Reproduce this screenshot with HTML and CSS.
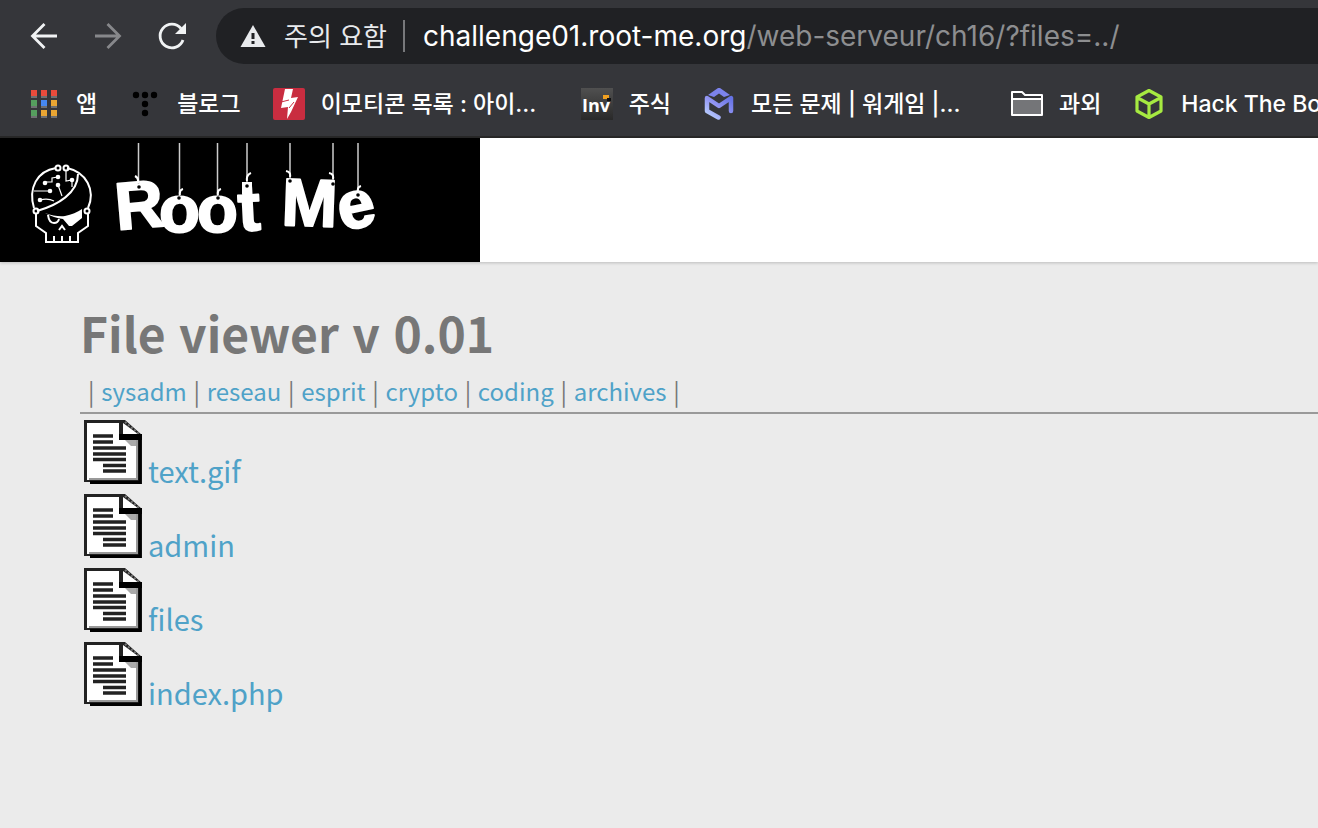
FILE: index.html
```html
<!DOCTYPE html>
<html lang="ko">
<head>
<meta charset="utf-8">
<title>File viewer v 0.01</title>
<link rel="stylesheet" href="styles.css">
</head>
<body>
<svg class="defs" aria-hidden="true">
  <symbol id="doc" viewBox="0 0 58 64">
    <path d="M0 0H41L58 15V64H6V62H0Z" fill="#222"/>
    <path d="M3 3H35V19H54V60H3Z" fill="#fff"/>
    <path d="M39 3L54 14H39Z" fill="#fff"/>
    <path d="M41 2L55 14" stroke="#777" stroke-width="2" stroke-dasharray="2 2"/>
    <path d="M35 14H58V20H35Z" fill="#000"/>
    <path d="M41 20H54V26H47Z" fill="#aaa"/>
    <path d="M53 20V59H5" fill="none" stroke="#999" stroke-width="2"/>
    <path d="M56 16V62.500H6" fill="none" stroke="#000" stroke-width="3"/>
    <path d="M9 16H29M9 22H29M9 28H42M9 34H42M9 39.500H42M19 45.500H42M19 51H42" stroke="#222" stroke-width="3.600"/>
  </symbol>
</svg>
<header class="browser">
  <div class="toolbar">
    <button class="nav" aria-label="뒤로"><svg viewBox="0 0 32 32"><path d="M29 16H5M16.500 4L4.500 16L16.500 28" fill="none" stroke="#f1f3f4" stroke-width="2.800"/></svg></button>
    <button class="nav" aria-label="앞으로"><svg viewBox="0 0 32 32"><path d="M3 16H27M15.500 4L27.500 16L15.500 28" fill="none" stroke="#87888b" stroke-width="2.800"/></svg></button>
    <button class="nav" aria-label="새로고침"><svg viewBox="0 0 32 32"><path d="M27 20A11.800 11.800 0 1 1 25 8.500" fill="none" stroke="#f1f3f4" stroke-width="2.800"/><path d="M30 3V14H19Z" fill="#f1f3f4"/></svg></button>
    <div class="omnibox">
      <button class="site-info"><svg viewBox="0 0 26 24"><path d="M13 1L25.500 23H.5Z" fill="#e8eaed"/><path d="M11.500 9h3v6h-3zM11.500 17h3v3h-3z" fill="#202124"/></svg><span class="hangul">주의 요함</span></button>
      <div class="address"><span class="host">challenge01.root-me.org</span><span class="path">/web-serveur/ch16/?files=../</span></div>
    </div>
  </div>
  <nav class="bookmarks">
    <a href="#"><svg viewBox="0 0 32 32"><path d="M3 9h6M13 9h6M23 9h6M3 19h6M13 19h6M23 19h6M3 29h6M13 29h6M23 29h6" stroke="#a9a9aa" stroke-width="1"/><path d="M3 2h6v6H3zM13 2h6v6h-6zM23 2h6v6h-6z" fill="#e94b3c"/><path d="M3 12h6v6H3zM3 22h6v6H3z" fill="#559e5e"/><path d="M13 12h6v6h-6z" fill="#4688f1"/><path d="M23 12h6v6h-6zM13 22h6v6h-6zM23 22h6v6h-6z" fill="#e9a533"/></svg><span class="hangul">앱</span></a>
    <a href="#"><svg viewBox="0 0 32 32"><g fill="#000"><circle cx="7" cy="7" r="3.200"/><circle cx="16" cy="7" r="3.200"/><circle cx="25" cy="7" r="3.200"/><circle cx="16" cy="16" r="3.200"/><circle cx="16" cy="25" r="3.200"/></g></svg><span class="hangul">블로그</span></a>
    <a href="#"><svg viewBox="0 0 32 32"><rect width="32" height="32" rx="2" fill="#c92d40"/><path d="M12 1H20L18 10L25 9L18 24L14 31L15 19L8 20Z" fill="#fff"/><path d="M8 14L16 12M16 20L21 14" stroke="#c92d40" stroke-width="1"/></svg><span class="hangul clipped">이모티콘 목록 : 아이...</span></a>
    <a href="#"><svg viewBox="0 0 32 32"><defs><linearGradient id="inv" x2="0" y2="1"><stop stop-color="#505050"/><stop offset="1" stop-color="#292929"/></linearGradient></defs><rect width="32" height="32" fill="url(#inv)"/><text class="inv" x="1" y="24">Inv</text><path d="M22 7h6v4h-6z" fill="#f0a020"/><path d="M26 10h4v3h-4z" fill="#111"/></svg><span class="hangul">주식</span></a>
    <a href="#"><svg viewBox="0 0 32 32"><defs><linearGradient id="dream" x1="1" y1="0" x2="0" y2="1"><stop stop-color="#6673e5"/><stop offset=".5" stop-color="#9295f3"/><stop offset="1" stop-color="#bdd5ff"/></linearGradient></defs><path d="M5 7L15 0H17L27 7L21 9L16 5.500L11 9Z" fill="#7c83ec"/><path d="M15.500 29.500L4 23V10L16 18L28 10V23" fill="none" stroke="url(#dream)" stroke-width="4.500" stroke-linecap="round" stroke-linejoin="round"/></svg><span class="hangul clipped">모든 문제 | 워게임 |...</span></a>
    <a href="#"><svg viewBox="0 0 32 32"><path d="M1 27V4H11L14 7H31V27Z" fill="#35363a"/><path d="M2 11H30V26H2Z" fill="#747578"/><path d="M1 27V4H11L14 7H31V27ZM1 11H31" fill="none" stroke="#fff" stroke-width="2" stroke-linejoin="round"/></svg><span class="hangul">과외</span></a>
    <a href="#"><svg viewBox="0 0 32 32"><path d="M16 2.500L28 9V23L16 29.500L4 23V9ZM4 9.500L16 16L28 9.500M16 16V29" fill="none" stroke="#a6ea41" stroke-width="3.200" stroke-linejoin="round"/></svg><span>Hack The Box</span></a>
  </nav>
</header>
<div class="banner">
  <a class="brand" href="#" aria-label="Root Me">
    <svg viewBox="0 0 480 124">
      <g fill="none" stroke="#fff" stroke-width="2">
        <path d="M56 30C37 33 28 50 34 70M67 30C86 34 96 52 88 70"/>
        <path d="M36 75V88L46 95V104H78V95L88 88V75M54 104V98M62 104V98M70 104V98"/>
        <path d="M37 73C58 67 78 55 78 36"/>
        <circle cx="58" cy="30" r="2.500"/><circle cx="66" cy="30" r="2.500"/><circle cx="36" cy="73" r="2.500"/><circle cx="87" cy="73" r="2.500"/>
        <path d="M45 44H52V40L58 39M66 32V43L72 42V49M58 47L62 58M34 53H50M40 62Q48 60 54 63" stroke-width="1.200"/>
        <path d="M48 77Q49 85 54 85Q58 85 59 81"/>
        <path d="M59 92L62 88L65 92"/>
      </g>
      <g fill="#fff"><circle cx="45" cy="45" r="2.300"/><circle cx="58" cy="39" r="2.300"/><circle cx="72" cy="42" r="2.300"/><circle cx="58" cy="47" r="2.300"/><circle cx="50" cy="53" r="2.300"/><circle cx="40" cy="62" r="2.300"/><path d="M45 75Q56 79 65 78Q75 76 82 71V80L72 88H69L63 81Q54 80 45 75Z"/></g>
      <g class="letters">
        <text x="117" y="92" transform="rotate(-5 117 92)">R</text>
        <text x="159" y="94">o</text>
        <text x="197" y="94">o</text>
        <text x="239" y="93" transform="rotate(-3 239 93)">t</text>
        <text x="281" y="87" transform="rotate(2 281 87)">M</text>
        <text x="342" y="93" transform="rotate(-12 342 93)">e</text>
      </g>
      <path d="M138.500 5V46M179.500 5V58M217.500 5V58M247 5V46M290 5V40M333 5V42M358 5V54" stroke="#ccc" stroke-width="1.500"/>
      <path class="tab" d="M242 44h10v12h-10z"/>
      <g fill="#000"><circle cx="139" cy="49" r="1.800"/><circle cx="179" cy="60" r="1.800"/><circle cx="218" cy="60" r="1.800"/><circle cx="247" cy="48" r="1.800"/><circle cx="290" cy="43" r="1.800"/><circle cx="333" cy="46" r="1.800"/><circle cx="358" cy="57" r="1.800"/></g>
      <path d="M138 45Q139 40 135 38M180 57Q179 52 183 51M218 57Q217 52 221 51M247 43Q246 37 251 35M290 39Q291 34 286 33M333 41Q334 36 329 35M358 54Q357 49 361 48" fill="none" stroke="#fff" stroke-width="2"/>
    </svg>
  </a>
</div>
<main class="page">
  <h1>File viewer v 0.01</h1>
  <nav class="sections">
    | <a href="#">sysadm</a> | <a href="#">reseau</a> | <a href="#">esprit</a> | <a href="#">crypto</a> | <a href="#">coding</a> | <a href="#">archives</a> |
  </nav>
  <hr>
  <ul class="files">
    <li><svg><use href="#doc"/></svg><a href="#">text.gif</a></li>
    <li><svg><use href="#doc"/></svg><a href="#">admin</a></li>
    <li><svg><use href="#doc"/></svg><a href="#">files</a></li>
    <li><svg><use href="#doc"/></svg><a href="#">index.php</a></li>
  </ul>
</main>
</body>
</html>
```
FILE: styles.css
```css
* { box-sizing: border-box; }
body {
  margin: 0;
  min-height: 100vh;
  background: #ebebeb;
  font-family: "Noto Sans CJK KR", sans-serif;
  overflow-x: hidden;
}
a { text-decoration: none; }
button { padding: 0; border: 0; background: none; font: inherit; color: inherit; }
svg { display: block; flex: none; }
.defs { display: none; }

.browser {
  background: #35363a;
  border-bottom: 2px solid #282828;
  font-family: Inter, "Noto Sans CJK KR", sans-serif;
  overflow: hidden;
}
.toolbar { display: flex; align-items: center; gap: 32px; padding: 8px 0 8px 28px; }
.nav svg { width: 32px; height: 32px; }
.omnibox {
  flex: 1;
  display: flex;
  align-items: center;
  height: 56px;
  margin-left: -4px;
  padding-left: 24px;
  border-radius: 28px 0 0 28px;
  background: #202124;
  font-size: 28px;
  white-space: nowrap;
}
.site-info {
  display: flex;
  align-items: center;
  gap: 18px;
  height: 32px;
  padding-right: 16px;
  border-right: 2px solid #77787b;
  color: #e8eaed;
  font-size: 26px;
}
.site-info svg { width: 26px; height: 24px; }
.hangul { padding-bottom: 4px; }
.address { padding-left: 18px; }
.host { color: #fff; }
.path { color: #8d8e90; }

.bookmarks { display: flex; gap: 32px; height: 64px; padding-left: 28px; }
.bookmarks a {
  display: flex;
  flex: none;
  align-items: center;
  gap: 16px;
  color: #fff;
  font-size: 23px;
  font-weight: 500;
  white-space: nowrap;
}
.bookmarks svg { width: 32px; height: 32px; }
.clipped { width: 228px; }
.inv { fill: #fff; font: 700 18px "Open Sans", sans-serif; }

.banner { background: #fff; box-shadow: 0 1px 3px rgba(0, 0, 0, .2); }
.brand { display: block; width: 480px; background: #000; }
.letters {
  fill: #fff;
  stroke: #fff;
  stroke-width: 2;
  stroke-linejoin: round;
  font: 700 67px "Liberation Sans", Arial, sans-serif;
}
.tab { fill: #fff; }

.page { padding: 36px 0 0 80px; color: #777; }
.page a { color: #4fa2c8; }
h1 { margin: 0; font-size: 48px; line-height: 68px; font-weight: 700; }
.sections { padding: 4px 0 0 8px; font-size: 24px; line-height: 42px; }
hr { margin: 0; border: 0 solid #999; border-width: 2px 0 0 1px; }
.files { margin: 0; padding: 6px 0 0 4px; list-style: none; font-size: 29px; }
.files li { display: flex; align-items: flex-end; gap: 6px; height: 74px; padding-bottom: 10px; }
.files svg { width: 58px; height: 64px; }
.files a { line-height: 28px; }
```
